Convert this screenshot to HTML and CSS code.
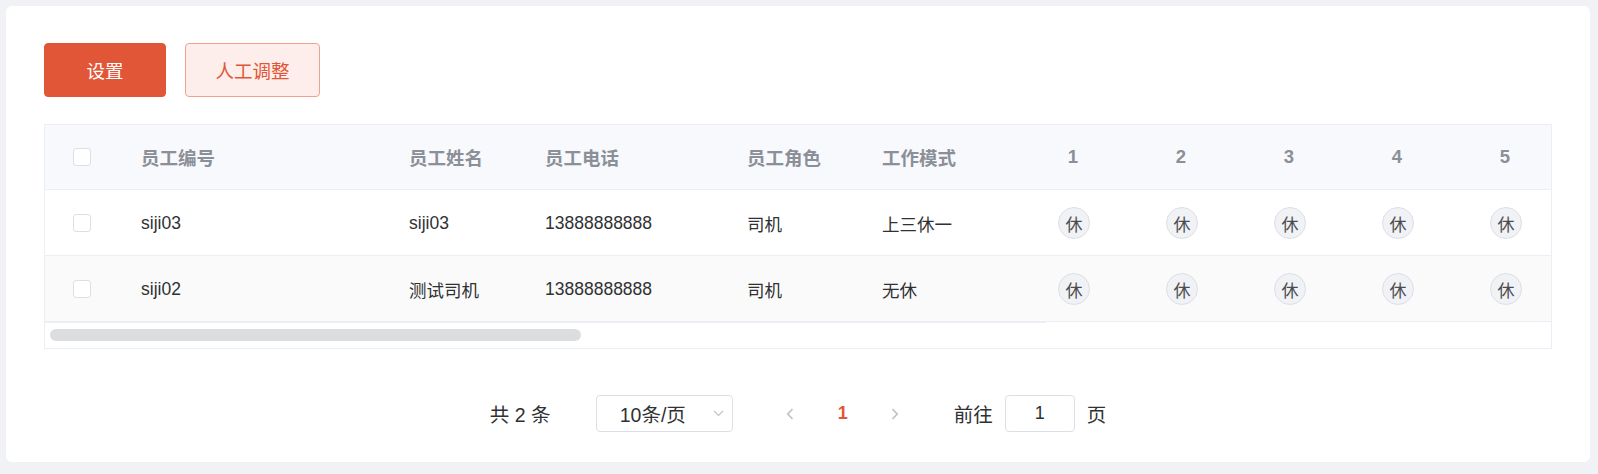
FILE: index.html
```html
<!DOCTYPE html>
<html lang="zh-CN">
<head>
<meta charset="utf-8">
<title>排班</title>
<link rel="stylesheet" href="styles.css">
</head>
<body>
<div class="card">
  <div class="toolbar">
    <button class="btn btn-primary">设置</button>
    <button class="btn btn-plain">人工调整</button>
  </div>

  <div class="table">
    <div class="table-body">
      <div class="row head">
        <div class="cell c-check"><span class="checkbox"></span></div>
        <div class="cell">员工编号</div>
        <div class="cell">员工姓名</div>
        <div class="cell">员工电话</div>
        <div class="cell">员工角色</div>
        <div class="cell">工作模式</div>
        <div class="cell day"><span class="day-label">1</span></div>
        <div class="cell day"><span class="day-label">2</span></div>
        <div class="cell day"><span class="day-label">3</span></div>
        <div class="cell day"><span class="day-label">4</span></div>
        <div class="cell day"><span class="day-label">5</span></div>
      </div>
      <div class="row">
        <div class="cell c-check"><span class="checkbox"></span></div>
        <div class="cell">siji03</div>
        <div class="cell">siji03</div>
        <div class="cell">13888888888</div>
        <div class="cell">司机</div>
        <div class="cell">上三休一</div>
        <div class="cell day"><span class="rest">休</span></div>
        <div class="cell day"><span class="rest">休</span></div>
        <div class="cell day"><span class="rest">休</span></div>
        <div class="cell day"><span class="rest">休</span></div>
        <div class="cell day"><span class="rest">休</span></div>
      </div>
      <div class="row striped">
        <div class="cell c-check"><span class="checkbox"></span></div>
        <div class="cell">siji02</div>
        <div class="cell">测试司机</div>
        <div class="cell">13888888888</div>
        <div class="cell">司机</div>
        <div class="cell">无休</div>
        <div class="cell day"><span class="rest">休</span></div>
        <div class="cell day"><span class="rest">休</span></div>
        <div class="cell day"><span class="rest">休</span></div>
        <div class="cell day"><span class="rest">休</span></div>
        <div class="cell day"><span class="rest">休</span></div>
      </div>
    </div>
    <div class="scroll">
      <div class="fixed-edge"></div>
      <div class="thumb"></div>
    </div>
  </div>

  <div class="pagination">
    <span class="total">共 2 条</span>
    <div class="sizes">
      <span>10条/页</span>
      <svg class="caret" width="11" height="7" viewBox="0 0 11 7"><path d="M1 1 L5.5 5.5 L10 1" fill="none" stroke="#c0c4cc" stroke-width="1.2"/></svg>
    </div>
    <span class="nav prev"><svg width="8" height="12" viewBox="0 0 8 12"><path d="M6.5 1 L1.8 6 L6.5 11" fill="none" stroke="#c0c4cc" stroke-width="1.8"/></svg></span>
    <span class="pager">1</span>
    <span class="nav next"><svg width="8" height="12" viewBox="0 0 8 12"><path d="M1.5 1 L6.2 6 L1.5 11" fill="none" stroke="#c0c4cc" stroke-width="1.8"/></svg></span>
    <span class="jumper">前往<span class="jump-input">1</span>页</span>
  </div>
</div>
</body>
</html>
```

FILE: styles.css
```css
* { box-sizing: border-box; }

body {
  margin: 0;
  background: #f1f2f5;
  font-family: "Liberation Sans", "Noto Sans CJK SC", sans-serif;
  color: #303133;
}

.card {
  margin: 6px;
  width: 1584px;
  height: 456px;
  background: #fff;
  border-radius: 6px;
  padding: 37px 38px 30px 38px;
}

.toolbar {
  display: flex;
  gap: 19px;
}

.btn {
  height: 54px;
  border-radius: 4px;
  font-family: inherit;
  font-size: 18.5px;
  padding: 0;
  cursor: pointer;
}

.btn-primary {
  width: 122px;
  background: #e25638;
  border: 1px solid #e25638;
  color: #fff;
}

.btn-plain {
  width: 135px;
  background: #fdeeeb;
  border: 1px solid #f2a090;
  color: #e25638;
}

.table {
  margin-top: 27px;
  width: 1508px;
  border: 1px solid #ebeef5;
}

.table-body {
  overflow: hidden;
}

.row {
  display: grid;
  grid-template-columns: 84px 268px 136px 202px 135px 176px repeat(5, 108px);
  height: 66px;
  border-bottom: 1px solid #ebeef5;
  font-size: 17.5px;
  color: #303133;
}

.row.head {
  height: 65px;
  background: #f8f9fd;
  color: #8b8f98;
  font-weight: bold;
  font-size: 18.5px;
}

.row.striped {
  background: #fafafa;
}

.cell {
  display: flex;
  align-items: center;
  padding-left: 12px;
  padding-top: 1px;
  white-space: nowrap;
}

.row.head .cell {
  padding-top: 0;
}

.cell.c-check {
  padding-left: 28px;
  padding-top: 0;
}

.checkbox {
  width: 18px;
  height: 18px;
  border: 1px solid #dcdfe6;
  border-radius: 3px;
  background: #fff;
}

.day-label {
  width: 30px;
  text-align: center;
}

.rest {
  width: 32px;
  height: 32px;
  border-radius: 50%;
  background: #f0f2f5;
  border: 1px solid #dcdfe6;
  display: flex;
  align-items: center;
  justify-content: center;
  font-size: 17px;
  color: #4a4c50;
}

.scroll {
  height: 26px;
}

.fixed-edge {
  width: 1001px;
  height: 1px;
  background: #ebeef5;
}

.thumb {
  margin: 6px 0 0 5px;
  width: 531px;
  height: 12px;
  border-radius: 6px;
  background: #dcdddf;
}

.pagination {
  margin-top: 46px;
  display: flex;
  justify-content: center;
  align-items: center;
  height: 37px;
  font-size: 19.5px;
  color: #303133;
}

.total {
  width: 106px;
  white-space: nowrap;
}

.sizes {
  width: 137px;
  height: 37px;
  border: 1px solid #dcdfe6;
  border-radius: 4px;
  display: flex;
  align-items: center;
  padding-left: 23px;
  white-space: nowrap;
}

.caret {
  margin-left: 27px;
}

.nav {
  width: 53px;
  display: flex;
  justify-content: center;
  align-items: center;
  height: 37px;
}

.prev {
  margin-left: 31px;
}

.pager {
  width: 52px;
  text-align: center;
  color: #e25638;
  font-weight: bold;
  font-size: 18px;
}

.jumper {
  margin-left: 32px;
  display: flex;
  align-items: center;
  white-space: nowrap;
}

.jump-input {
  width: 70px;
  height: 37px;
  margin: 0 12px;
  border: 1px solid #dcdfe6;
  border-radius: 4px;
  display: flex;
  align-items: center;
  justify-content: center;
  font-size: 18px;
}
```
